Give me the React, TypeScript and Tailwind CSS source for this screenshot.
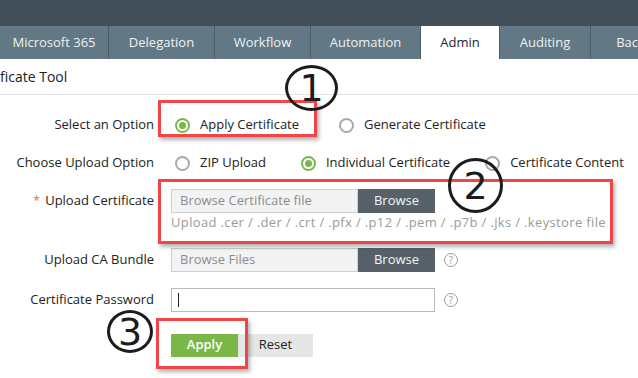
import React from "react";

const tabs = [
  { label: "Microsoft 365", w: "w-[109px]" },
  { label: "Delegation", w: "w-[106px]" },
  { label: "Workflow", w: "w-[96px]" },
  { label: "Automation", w: "w-[110px]" },
  { label: "Admin", w: "w-[79px]", active: true },
  { label: "Auditing", w: "w-[91px]" },
  { label: "Back", w: "w-[80px]" },
];

function Radio({ on, label }: { on?: boolean; label: string }) {
  return (
    <label className="flex items-center gap-[10px]">
      <span
        className={`flex h-[15px] w-[15px] items-center justify-center rounded-full border-2 ${
          on ? "border-[#7ab648]" : "border-[#a9a9a9]"
        }`}
      >
        {on && <span className="h-[7px] w-[7px] rounded-full bg-[#7ab648]" />}
      </span>
      <span className="text-[#222]">{label}</span>
    </label>
  );
}

function Help() {
  return (
    <span className="ml-[9px] flex h-[14px] w-[14px] items-center justify-center rounded-full border border-[#9a9a9a] text-[10px] leading-none text-[#9a9a9a]">
      ?
    </span>
  );
}

function FileInput({ placeholder }: { placeholder: string }) {
  return (
    <div className="flex h-[24px] w-[264px]">
      <div className="flex flex-1 items-center border border-[#cfcfcf] bg-[#f3f3f3] px-[8px] text-[#8c8c8c]">
        {placeholder}
      </div>
      <button className="w-[77px] bg-[#566169] text-[#f4f4f4]">Browse</button>
    </div>
  );
}

function Circled({ n, className }: { n: string; className: string }) {
  return (
    <div
      className={`absolute flex items-center justify-center rounded-[50%] border-[3px] border-[#1c1c1c] text-[38px] leading-none text-[#1c1c1c] ${className}`}
      style={{ fontFamily: '"DejaVu Sans", sans-serif' }}
    >
      {n}
    </div>
  );
}

export default function App() {
  return (
    <div
      className="relative h-[378px] w-[638px] overflow-hidden bg-white text-[13px] text-[#222]"
      style={{ fontFamily: '"Open Sans", "Liberation Sans", sans-serif' }}
    >
      {/* top bar */}
      <div className="h-[26px] bg-[#434f58]" />
      <nav className="flex h-[33px] bg-[#627884]">
        {tabs.map((t) => (
          <div
            key={t.label}
            className={`flex shrink-0 items-center justify-center border-r border-[#4c5c66] text-[13px] font-medium ${t.w} ${
              t.active ? "bg-white text-[#1b2533]" : "text-[#eef2f4]"
            }`}
          >
            {t.label}
          </div>
        ))}
      </nav>

      <div className="flex h-[36px] items-center border-b border-[#e2e2e2] text-[14px] text-[#222]">
        ficate Tool
      </div>

      <div className="pt-[16px]">
        <div className="flex h-[28px] items-center">
          <div className="w-[155px] pr-[1px] text-right">Select an Option</div>
          <div className="ml-[20px] flex items-center gap-[40px]">
            <Radio on label="Apply Certificate" />
            <Radio label="Generate Certificate" />
          </div>
        </div>

        <div className="mt-[10px] flex h-[28px] items-center">
          <div className="w-[155px] pr-[1px] text-right">Choose Upload Option</div>
          <div className="ml-[20px] flex items-center gap-[35px]">
            <Radio label="ZIP Upload" />
            <Radio on label="Individual Certificate" />
            <Radio label="Certificate Content" />
          </div>
        </div>

        <div className="mt-[12px] flex">
          <div className="flex h-[24px] w-[155px] items-center justify-end pr-[1px]">
            <span className="mr-[5px] text-[#e8743b]">*</span>Upload Certificate
          </div>
          <div className="ml-[16px]">
            <FileInput placeholder="Browse Certificate file" />
            <div className="mt-[0px] tracking-[0.35px] text-[#9a9a9a]">
              Upload .cer / .der / .crt / .pfx / .p12 / .pem / .p7b / .jks / .keystore file
            </div>
          </div>
        </div>

        <div className="mt-[15px] flex h-[24px] items-center">
          <div className="w-[155px] pr-[1px] text-right">Upload CA Bundle</div>
          <div className="ml-[16px] flex items-center">
            <FileInput placeholder="Browse Files" />
            <Help />
          </div>
        </div>

        <div className="mt-[16px] flex h-[24px] items-center">
          <div className="w-[155px] pr-[1px] text-right">Certificate Password</div>
          <div className="ml-[16px] flex items-center">
            <div className="flex h-[24px] w-[264px] items-center border border-[#b9b9b9] px-[6px]">
              <span className="h-[14px] w-px bg-[#222]" />
            </div>
            <Help />
          </div>
        </div>

        <div className="ml-[171px] mt-[22px] flex h-[23px]">
          <button className="w-[67px] bg-[#7ab648] font-semibold text-white">Apply</button>
          <button className="w-[75px] bg-[#e6e6e6] text-[#222]">Reset</button>
        </div>
      </div>

      {/* annotation boxes */}
      <div className="absolute left-[158px] top-[100px] h-[37px] w-[159px] border-[3px] border-[#f0464a] shadow-[2px_3px_4px_rgba(0,0,0,0.3)]" />
      <div className="absolute left-[158px] top-[179px] h-[65px] w-[455px] border-[3px] border-[#f0464a] shadow-[2px_3px_4px_rgba(0,0,0,0.3)]" />
      <div className="absolute left-[156px] top-[318px] h-[51px] w-[92px] border-[3px] border-[#f0464a] shadow-[2px_3px_4px_rgba(0,0,0,0.3)]" />

      <Circled n="1" className="left-[285px] top-[65px] h-[46px] w-[53px]" />
      <Circled n="2" className="left-[448px] top-[158px] h-[55px] w-[55px]" />
      <Circled n="3" className="left-[107px] top-[310px] h-[43px] w-[46px]" />
    </div>
  );
}
